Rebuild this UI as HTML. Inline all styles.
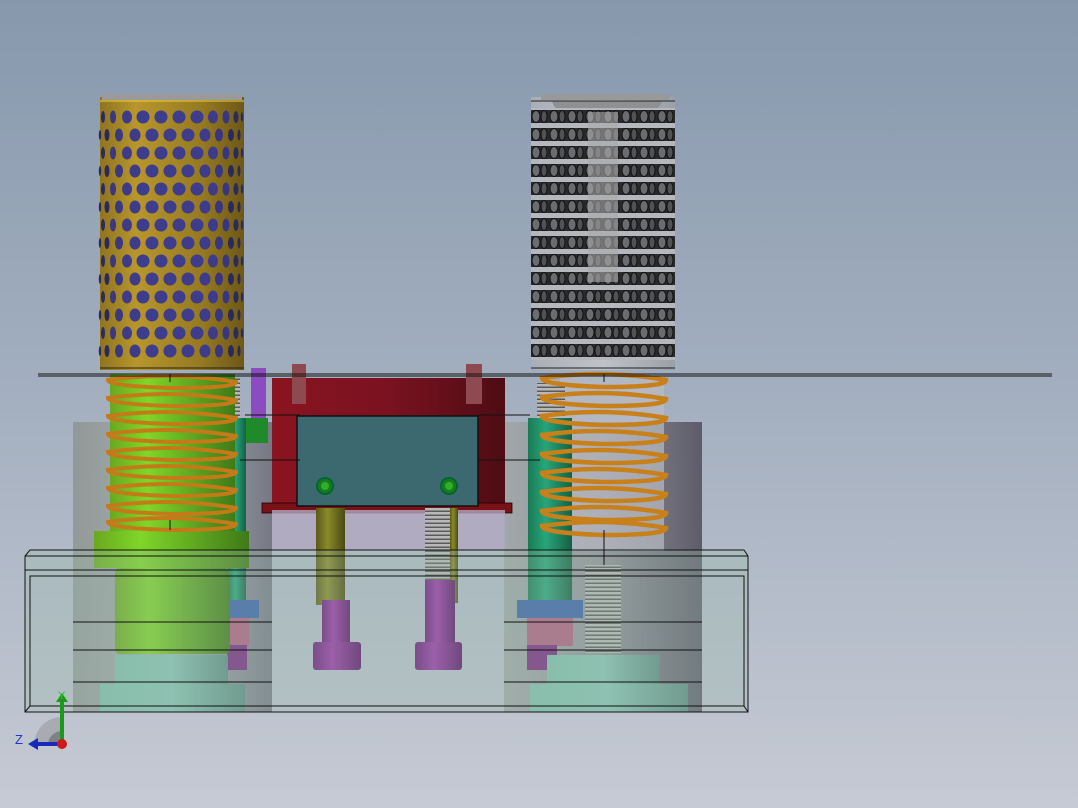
<!DOCTYPE html>
<html><head><meta charset="utf-8"><style>
html,body{margin:0;padding:0;width:1078px;height:808px;overflow:hidden}
svg{display:block}
</style></head><body>
<svg width="1078" height="808" viewBox="0 0 1078 808" xmlns="http://www.w3.org/2000/svg" font-family="Liberation Sans, sans-serif">
<defs>
<linearGradient id="bg" x1="0" y1="0" x2="0" y2="1">
<stop offset="0" stop-color="#8798ad"/><stop offset="0.5" stop-color="#a4b0c0"/><stop offset="1" stop-color="#c6cad4"/></linearGradient>
<linearGradient id="gold" x1="0" x2="1"><stop offset="0" stop-color="#8f7420"/><stop offset="0.25" stop-color="#b8962c"/><stop offset="0.7" stop-color="#967a22"/><stop offset="1" stop-color="#6e5818"/></linearGradient>
<linearGradient id="grn" x1="0" x2="1"><stop offset="0" stop-color="#6aa820"/><stop offset="0.3" stop-color="#7fd628"/><stop offset="1" stop-color="#3f7a18"/></linearGradient>
<linearGradient id="gcyl" x1="0" x2="1"><stop offset="0" stop-color="#8d948f"/><stop offset="0.5" stop-color="#a8aeb0"/><stop offset="1" stop-color="#6d6d7a"/></linearGradient>
<linearGradient id="gcylr" x1="0" x2="1"><stop offset="0" stop-color="#a0a6a6"/><stop offset="0.5" stop-color="#8d8d95"/><stop offset="1" stop-color="#55525f"/></linearGradient>
<linearGradient id="cage2" x1="0" x2="1"><stop offset="0" stop-color="#a9aeb6"/><stop offset="0.5" stop-color="#bfc3c9"/><stop offset="1" stop-color="#9aa0a8"/></linearGradient>
<linearGradient id="pale" x1="0" x2="1"><stop offset="0" stop-color="#7fc0ad"/><stop offset="0.5" stop-color="#88c4b4"/><stop offset="1" stop-color="#5e8d82"/></linearGradient>
<linearGradient id="purp" x1="0" x2="1"><stop offset="0" stop-color="#6a1a78"/><stop offset="0.4" stop-color="#9c34a8"/><stop offset="1" stop-color="#5c1468"/></linearGradient>
<linearGradient id="teal" x1="0" x2="1"><stop offset="0" stop-color="#1a7a55"/><stop offset="0.4" stop-color="#27a57a"/><stop offset="1" stop-color="#156045"/></linearGradient>
<linearGradient id="olive" x1="0" x2="1"><stop offset="0" stop-color="#5a5a18"/><stop offset="0.4" stop-color="#8a8a28"/><stop offset="1" stop-color="#4a4a12"/></linearGradient>
<linearGradient id="red" x1="0" x2="1"><stop offset="0" stop-color="#8a1420"/><stop offset="0.5" stop-color="#7a1220"/><stop offset="1" stop-color="#4e0c14"/></linearGradient>
<pattern id="thread" width="4" height="4" patternUnits="userSpaceOnUse"><rect width="4" height="4" fill="#b8b8b8"/><rect y="2.5" width="4" height="1.5" fill="#5a5a5a"/></pattern>
<pattern id="rings" x="531" y="108" width="18" height="18" patternUnits="userSpaceOnUse">
<rect width="18" height="18" fill="#b4b8be"/>
<rect y="2" width="18" height="13" fill="#2a2a2c"/>
<ellipse cx="5" cy="8.5" rx="4" ry="6" fill="#6a6c70" stroke="#111" stroke-width="1"/>
<ellipse cx="13" cy="8.5" rx="3" ry="6" fill="#505254" stroke="#111" stroke-width="1"/>
</pattern>
<g id="rowA">
<ellipse cx="103" cy="0" rx="2" ry="6" fill="#2c2a5a"/>
<ellipse cx="113" cy="0" rx="3" ry="6.5" fill="#3a3880"/>
<ellipse cx="127" cy="0" rx="5" ry="6.5" fill="#3d3b8a"/>
<circle cx="143" cy="0" r="6.5" fill="#3e3c8c"/>
<circle cx="161" cy="0" r="6.5" fill="#3e3c8c"/>
<circle cx="179" cy="0" r="6.5" fill="#3e3c8c"/>
<circle cx="197" cy="0" r="6.5" fill="#3e3c8c"/>
<ellipse cx="213" cy="0" rx="5" ry="6.5" fill="#3d3b8a"/>
<ellipse cx="226" cy="0" rx="3.5" ry="6.5" fill="#383680"/>
<ellipse cx="236" cy="0" rx="2.5" ry="6" fill="#2c2a5a"/>
<ellipse cx="242" cy="0" rx="1.2" ry="5" fill="#2c2a5a"/>
</g>
<g id="rowB">
<ellipse cx="100" cy="0" rx="1.2" ry="5" fill="#2c2a5a"/>
<ellipse cx="107" cy="0" rx="2.5" ry="6" fill="#2c2a5a"/>
<ellipse cx="119" cy="0" rx="4" ry="6.5" fill="#3a3880"/>
<ellipse cx="135" cy="0" rx="5.5" ry="6.5" fill="#3d3b8a"/>
<circle cx="152" cy="0" r="6.5" fill="#3e3c8c"/>
<circle cx="170" cy="0" r="6.5" fill="#3e3c8c"/>
<circle cx="188" cy="0" r="6.5" fill="#3e3c8c"/>
<ellipse cx="205" cy="0" rx="5.5" ry="6.5" fill="#3d3b8a"/>
<ellipse cx="219" cy="0" rx="4" ry="6.5" fill="#383680"/>
<ellipse cx="231" cy="0" rx="3" ry="6" fill="#2c2a5a"/>
<ellipse cx="239" cy="0" rx="1.5" ry="5.5" fill="#2c2a5a"/>
</g>
<g id="coilL"><path d="M108 0 Q172 -9 236 2 Q236 8 172 8 Q108 6 108 0 Z" fill="none" stroke="#c47a18" stroke-width="4"/></g>
<g id="coilR"><path d="M542 0 Q604 -9 666 2 Q666 9 604 9 Q542 7 542 0 Z" fill="none" stroke="#c8801a" stroke-width="4.5"/></g>
</defs>
<rect width="1078" height="808" fill="url(#bg)"/>

<rect x="73" y="422" width="199" height="290" fill="url(#gcyl)" opacity="0.85"/>
<rect x="504" y="422" width="198" height="290" fill="url(#gcylr)" opacity="0.9"/>
<rect x="560" y="376" width="104" height="175" fill="#b9bcc4" opacity="0.7"/>

<rect x="272" y="378" width="233" height="132" fill="url(#red)"/>
<rect x="262" y="503" width="250" height="10" fill="#7a1018" stroke="#200" stroke-width="0.8"/>
<rect x="272" y="510" width="233" height="40" fill="#b2a8bf" opacity="0.8"/>
<rect x="297" y="416" width="181" height="90" fill="#3c6870" stroke="#111" stroke-width="1.5"/>
<circle cx="325" cy="486" r="8" fill="#1a7a1a" stroke="#063" stroke-width="2"/><circle cx="325" cy="486" r="4" fill="#2bb02b"/>
<circle cx="449" cy="486" r="8" fill="#1a7a1a" stroke="#063" stroke-width="2"/><circle cx="449" cy="486" r="4" fill="#2bb02b"/>
<rect x="292" y="364" width="14" height="40" fill="#8e4a50"/><rect x="466" y="364" width="16" height="40" fill="#8e4a50"/>
<rect x="251" y="368" width="15" height="70" fill="#8a4cc0"/>
<rect x="246" y="418" width="22" height="25" fill="#1f8a2a"/>

<rect x="228" y="418" width="18" height="182" fill="url(#teal)"/>
<rect x="528" y="418" width="44" height="182" fill="url(#teal)"/>
<rect x="232" y="378" width="8" height="40" fill="url(#thread)"/>
<rect x="537" y="383" width="28" height="35" fill="url(#thread)"/>

<rect x="316" y="508" width="29" height="97" fill="url(#olive)"/>
<rect x="322" y="600" width="28" height="50" fill="url(#purp)"/>
<rect x="313" y="642" width="48" height="28" rx="3" fill="url(#purp)"/>
<rect x="425" y="508" width="30" height="73" fill="url(#thread)"/>
<rect x="450" y="508" width="8" height="95" fill="url(#olive)"/>
<rect x="425" y="580" width="30" height="70" fill="url(#purp)"/>
<rect x="415" y="642" width="47" height="28" rx="3" fill="url(#purp)"/>

<rect x="227" y="600" width="32" height="18" fill="#3a62a8"/>
<rect x="227" y="618" width="22" height="28" fill="#b06080"/>
<rect x="227" y="645" width="20" height="25" fill="#7a2a80"/>
<rect x="517" y="600" width="66" height="18" fill="#3a62a8"/>
<rect x="527" y="618" width="46" height="28" fill="#b06080"/>
<rect x="527" y="645" width="30" height="25" fill="#7a2a80"/>
<rect x="585" y="565" width="36" height="88" fill="url(#thread)"/>

<rect x="110" y="374" width="125" height="157" fill="url(#grn)"/>
<rect x="94" y="531" width="155" height="37" fill="url(#grn)"/>
<rect x="115" y="568" width="115" height="86" rx="5" fill="url(#grn)"/>
<g>
<use href="#coilL" y="380"/><use href="#coilL" y="398"/><use href="#coilL" y="416"/><use href="#coilL" y="434"/><use href="#coilL" y="452"/><use href="#coilL" y="470"/><use href="#coilL" y="488"/><use href="#coilL" y="506"/><use href="#coilL" y="522"/>
</g>
<g>
<use href="#coilR" y="378"/><use href="#coilR" y="397"/><use href="#coilR" y="416"/><use href="#coilR" y="435"/><use href="#coilR" y="454"/><use href="#coilR" y="473"/><use href="#coilR" y="492"/><use href="#coilR" y="511"/><use href="#coilR" y="526"/>
</g>
<rect x="115" y="655" width="113" height="32" fill="url(#pale)"/>
<rect x="100" y="684" width="145" height="28" fill="url(#pale)"/>
<rect x="547" y="655" width="113" height="32" fill="url(#pale)"/>
<rect x="530" y="684" width="158" height="28" fill="url(#pale)"/>

<rect x="25" y="570" width="723" height="142" fill="#9cbcaa" opacity="0.32"/>
<rect x="25" y="550" width="723" height="20" fill="#9cbcaa" opacity="0.3"/>
<g fill="none" stroke="#111" stroke-width="1">
<path d="M30 550 H744 L748 556 V712 H25 V556 Z"/>
<path d="M25 556 H748 M25 570 H748 M30 576 H744 V706 H30 Z M25 712 L30 706 M748 712 L744 706"/>
<path d="M73 622 H272 M73 650 H272 M73 682 H272 M504 622 H702 M504 650 H702 M504 682 H702"/>
<path d="M38 374 H1052 M38 376 H1052" stroke-width="1"/>
<path d="M245 415 H300 M478 415 H530 M240 460 H300 M478 460 H540"/>
<path d="M170 374 V382 M170 520 V530 M604 374 V382 M604 530 V565"/>
</g>

<rect x="100" y="97" width="144" height="273" fill="url(#gold)"/>
<rect x="102" y="94" width="140" height="6" fill="#9a9a9a"/>
<line x1="100" y1="101" x2="244" y2="101" stroke="#f0d040" stroke-width="1"/>
<line x1="100" y1="368" x2="244" y2="368" stroke="#222" stroke-width="1"/>
<use href="#rowA" y="117"/><use href="#rowB" y="135"/><use href="#rowA" y="153"/><use href="#rowB" y="171"/><use href="#rowA" y="189"/><use href="#rowB" y="207"/><use href="#rowA" y="225"/><use href="#rowB" y="243"/><use href="#rowA" y="261"/><use href="#rowB" y="279"/><use href="#rowA" y="297"/><use href="#rowB" y="315"/><use href="#rowA" y="333"/><use href="#rowB" y="351"/>

<rect x="531" y="97" width="144" height="273" fill="url(#cage2)"/>
<rect x="541" y="94" width="128" height="6" fill="#999"/>
<path d="M552 101 H662 Q660 112 640 116 H574 Q554 112 552 101 Z" fill="#8f9094"/>
<rect x="531" y="108" width="144" height="252" fill="url(#rings)"/>
<rect x="588" y="112" width="30" height="170" fill="#a8a8aa" opacity="0.6"/>
<line x1="531" y1="101" x2="675" y2="101" stroke="#222"/>
<line x1="531" y1="368" x2="675" y2="368" stroke="#222"/>

<path d="M34 745 A28 28 0 0 1 62 717 V745 Z" fill="#a8acb2"/>
<path d="M48 745 A14 14 0 0 1 62 731 V745 Z" fill="#7e8288"/>
<rect x="60" y="700" width="4" height="42" fill="#1a9a1a"/><path d="M56 702 L62 693 L68 702 Z" fill="#1a9a1a"/>
<rect x="36" y="742" width="26" height="4" fill="#1a2ab8"/><path d="M38 738 L28 744 L38 750 Z" fill="#1a2ab8"/>
<circle cx="62" cy="744" r="5" fill="#d01818"/>
<text x="58" y="699" font-size="11" fill="#2c2">Y</text>
<text x="15" y="744" font-size="13" fill="#23c">Z</text>
</svg>
</body></html>
